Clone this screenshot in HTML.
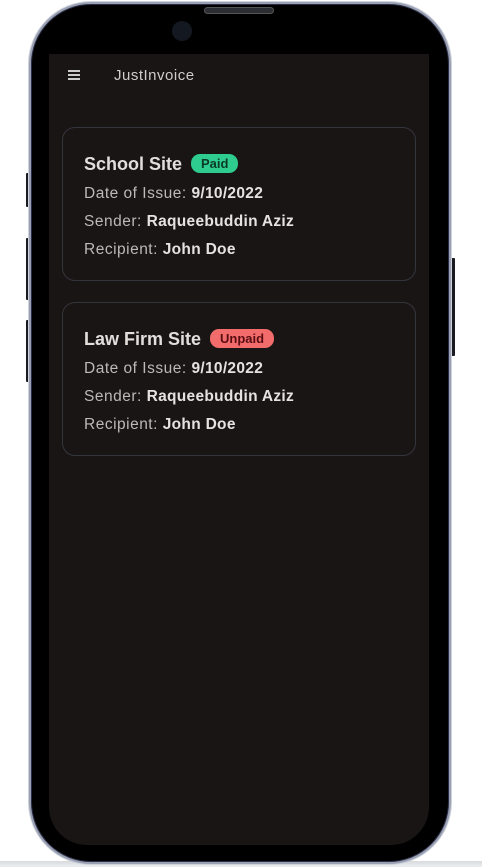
<!DOCTYPE html>
<html><head><meta charset="utf-8"><style>
*{margin:0;padding:0;box-sizing:border-box}
body{width:482px;height:867px;background:#fff;position:relative;overflow:hidden;font-family:"Liberation Sans",sans-serif}
.floor{position:absolute;left:0;right:0;top:861px;height:6px;background:linear-gradient(#d8dade,#eceef0)}
.phone{position:absolute;left:29px;top:2px;width:422px;height:862px;border-radius:62px;background:#000;border:2px solid #9aa0b4;box-shadow:0 0 0 1px #2a2d45 inset,0 0 0 1px #cfd3dc}
.btn{position:absolute;background:#1a1a22;border-radius:1px}
.screen{position:absolute;left:49px;top:54px;width:380px;height:791px;background:#181514;border-radius:0 0 38px 38px;overflow:hidden}
.cam{position:absolute;left:172px;top:21px;width:20px;height:20px;border-radius:50%;background:#141820}
.spk{position:absolute;left:204px;top:7px;width:70px;height:7px;border-radius:4px;background:#2b2d33;border:1px solid #555}
.hdr{position:absolute;left:0;top:0;width:380px;height:44px;color:#ddd}
.menu{position:absolute;left:19px;top:16px;width:12px}
.menu i{display:block;height:2px;background:#ccc;margin-bottom:2px}
.title{position:absolute;left:65px;top:13px;font-size:15px;letter-spacing:0.5px;color:#d0ccca}
.card{position:absolute;left:13px;width:354px;height:154px;border:1px solid #34353c;border-radius:13px;color:#d4d0ce}
.card h2{position:absolute;left:21px;top:26px;font-size:18px;font-weight:bold;color:#e2dedc;white-space:nowrap}
.badge{display:inline-block;font-size:13px;font-weight:bold;padding:2px 10px;border-radius:9px;vertical-align:2px;margin-left:9px}
.card p{position:absolute;left:21px;font-size:15.5px;letter-spacing:0.5px;color:#bdb9b7;white-space:nowrap}
.card b{color:#e6e2e0;letter-spacing:0.3px}
</style></head><body>
<div class="floor"></div>
<div class="btn" style="left:26px;top:173px;width:4px;height:34px"></div>
<div class="btn" style="left:26px;top:238px;width:4px;height:62px"></div>
<div class="btn" style="left:26px;top:320px;width:4px;height:62px"></div>
<div class="btn" style="left:451px;top:258px;width:4px;height:98px"></div>
<div class="phone"></div>
<div class="spk"></div>
<div class="cam"></div>
<div class="screen">
 <div class="hdr"><div class="menu"><i></i><i></i><i></i></div><div class="title">JustInvoice</div></div>
 <div class="card" style="top:73px">
  <h2>School Site<span class="badge" style="background:#2ecc8f;color:#0b3a26">Paid</span></h2>
  <p style="top:57px">Date of Issue: <b>9/10/2022</b></p>
  <p style="top:85px">Sender: <b>Raqueebuddin Aziz</b></p>
  <p style="top:113px">Recipient: <b>John Doe</b></p>
 </div>
 <div class="card" style="top:248px">
  <h2>Law Firm Site<span class="badge" style="background:#f26c6c;color:#5a0d12">Unpaid</span></h2>
  <p style="top:57px">Date of Issue: <b>9/10/2022</b></p>
  <p style="top:85px">Sender: <b>Raqueebuddin Aziz</b></p>
  <p style="top:113px">Recipient: <b>John Doe</b></p>
 </div>
</div>
</body></html>
